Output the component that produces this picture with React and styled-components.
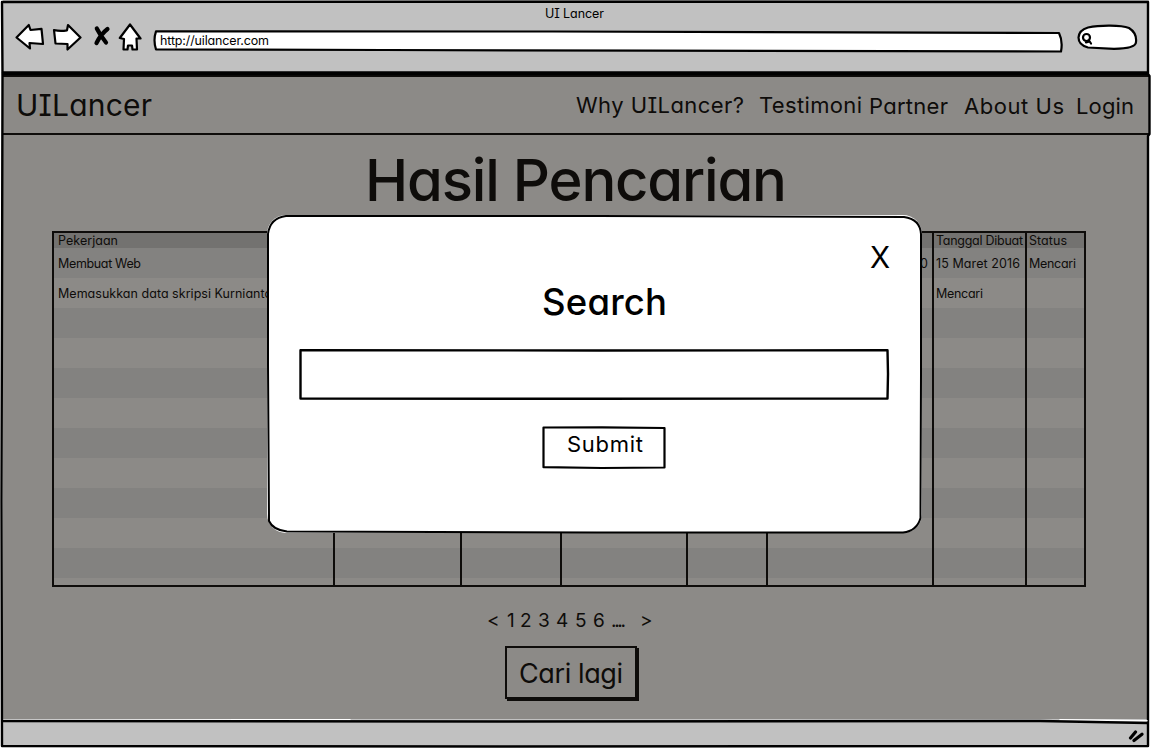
import React, { useLayoutEffect, useRef, useState } from "react";
import styled, { createGlobalStyle } from "styled-components";

const INK = "#0e0c0a";
const SHADE = "#8c8a87";

const Global = createGlobalStyle`
  * { box-sizing: border-box; }
  body {
    margin: 0;
    background: #fff;
    font-family: Inter, "Open Sans", "Liberation Sans", sans-serif;
    font-feature-settings: "cv11", "cv08";
    overflow: hidden;
  }
`;

const Page = styled.div`
  position: relative;
  width: 1151px;
  height: 749px;
  overflow: hidden;
`;

const Window = styled.div`
  display: flex;
  flex-direction: column;
  width: 1149px;
  height: 747px;
  padding-left: 3px;
`;

const Chrome = styled.header`
  display: flex;
  flex-direction: column;
  height: 74px;
  padding-top: 4px;
  background: #c1c1c1;
`;

const TitleBar = styled.div`
  display: flex;
  justify-content: center;
  height: 19px;
  padding-right: 3px;
`;

const Toolbar = styled.div`
  display: flex;
  align-items: flex-start;
  padding-left: 11px;
`;

const Icon = styled.svg`
  display: block;
  flex: none;
  width: ${(p) => p.$w}px;
  height: ${(p) => p.$h}px;
  margin-left: ${(p) => p.$gap || 0}px;
  fill: #fff;
  stroke: #000;
  stroke-width: ${(p) => p.$line || 2.2};
  stroke-linejoin: round;
  stroke-linecap: round;
`;

const AddressBar = styled.div`
  position: relative;
  display: flex;
  align-items: center;
  width: 910px;
  height: 24px;
  margin: 6px 0 0 9px;
  padding-left: 7px;
`;

const Outline = styled.svg`
  position: absolute;
  inset: 0;
  width: 100%;
  height: 100%;
  overflow: visible;
  pointer-events: none;
  fill: ${(p) => p.$fill || "none"};
  stroke: ${(p) => p.$ink || "#000"};
  stroke-width: ${(p) => p.$line || 2.2};
  stroke-linejoin: round;
  stroke-linecap: round;
`;

const Type = styled.span`
  position: relative;
  display: block;
  flex: none;
  width: ${(p) => p.$width}px;
  margin-top: ${(p) => p.$drop || 0}px;
  margin-left: ${(p) => p.$indent || 0}px;
  font-size: ${(p) => p.$size}px;
  font-weight: ${(p) => p.$weight || 400};
  line-height: ${(p) => p.$leading || 20}px;
  color: ${(p) => p.$color || INK};
  white-space: pre;
`;

/* Spreads the letters of a label evenly over the given width. */
function Label({ children, width, ...rest }) {
  const ref = useRef(null);
  const [spacing, setSpacing] = useState(0);
  useLayoutEffect(() => {
    const natural = ref.current.getBoundingClientRect().width;
    const gaps = Math.max(1, String(children).length - 1);
    setSpacing((width - natural) / gaps);
  }, [children, width]);
  return (
    <Type $width={width} {...rest}>
      <span ref={ref} style={{ letterSpacing: spacing }}>
        {children}
      </span>
    </Type>
  );
}

const NavBar = styled.nav`
  display: flex;
  align-items: flex-start;
  justify-content: space-between;
  height: 61px;
  padding: 13px 15px 0 13px;
  background: ${SHADE};
  border-top: 3px solid ${INK};
  border-bottom: 2px solid ${INK};
`;

const NavLinks = styled.div`
  display: flex;
  align-items: flex-start;
`;

const Body = styled.main`
  display: flex;
  flex-direction: column;
  align-items: flex-start;
  height: 584px;
  background: ${SHADE};
`;

const Heading = styled.h1`
  display: flex;
  height: 96px;
  margin: 0;
  padding: 14px 0 0 362px;
`;

const Table = styled.div`
  width: 1034px;
  height: 356px;
  margin-left: 49px;
  border: 2px solid ${INK};
  overflow: hidden;
`;

const Row = styled.div`
  display: grid;
  grid-template-columns: 281px 127px 100px 126px 80px 166px 93px 1fr;
  height: ${(p) => p.$h}px;
  background: ${(p) => p.$bg};
`;

const Cell = styled.div`
  display: flex;
  align-items: center;
  justify-content: ${(p) => (p.$end ? "flex-end" : "flex-start")};
  min-width: 0;
  padding: ${(p) => (p.$low ? 1 : 0)}px ${(p) => (p.$end ? 4 : 0)}px 0 ${(p) => (p.$first ? 4 : 2)}px;
  border-right: 2px solid ${INK};
  &:last-child { border-right: 0; }
`;

const Pager = styled.div`
  display: flex;
  margin: 24px 0 0 484px;
`;

const MoreButton = styled.div`
  position: relative;
  width: 132px;
  height: 53px;
  margin: 15px 0 0 502px;
  padding: 11px 0 0 12px;
  border: 2px solid ${INK};
  background: ${SHADE};
  box-shadow: 2px 2px 0 ${INK};
`;

const StatusBar = styled.footer`
  display: flex;
  justify-content: flex-end;
  height: 28px;
  padding: 10px 5px 0 0;
  background: #c1c1c1;
`;

const Modal = styled.section`
  position: absolute;
  left: 267px;
  top: 215px;
  display: flex;
  flex-direction: column;
  align-items: flex-start;
  width: 655px;
  height: 318px;
  padding: 24px 33px 0 32px;
  border-radius: 19px;
  background: #fff;
`;

const Close = styled.div`
  align-self: flex-end;
  height: 42px;
`;

const Field = styled.div`
  position: relative;
  width: 590px;
  height: 51px;
  margin-top: 26px;
`;

const Submit = styled.div`
  position: relative;
  width: 124px;
  height: 43px;
  margin: 26px 0 0 243px;
  padding: 3px 0 0 25px;
`;

const columns = ["Pekerjaan", "", "", "", "", "", "Tanggal Dibuat", "Status"];
const headWidths = [60, 0, 0, 0, 0, 0, 87, 38];
const rows = [
  [["Membuat Web", 83], 0, 0, 0, 0, ["0", 8], ["15 Maret 2016", 84], ["Mencari", 47]],
  [["Memasukkan data skripsi Kurnianto", 214], 0, 0, 0, 0, 0, ["Mencari", 47], 0],
  [], [], [], [], [], [], [], [], [],
];

const pages = [
  ["<", 12, 0], ["1", 6, 8], ["2", 11, 7], ["3", 11, 7], ["4", 12, 7],
  ["5", 11, 7], ["6", 11, 7], ["....", 15, 7], [">", 13, 14],
];

export default function App() {
  return (
    <Page>
      <Global />
      <Window>
        <Chrome>
          <TitleBar>
            <Label width={59} $size={12.5} $color="#000">UI Lancer</Label>
          </TitleBar>
          <Toolbar>
            <Icon $w={31} $h={29} viewBox="14 23 31 29">
              <path d="M16.5 37.5 28.8 25 30.5 30 41.5 28.8 43 44 29.5 43 30 48.5Z" />
            </Icon>
            <Icon $w={31} $h={29} $gap={6} viewBox="51 23 31 29">
              <path d="M54 30 Q60 31.5 67 30.3L68 25 80.5 37.5 67.5 49.5 67.5 44 55.5 43.5Z" />
            </Icon>
            <Icon $w={20} $h={29} $gap={10} $line={4.2} viewBox="92 23 20 29">
              <path d="M96.800 28.500Q100 35 106 42.500M107.500 29 Q101 34 96.500 43" fill="none" />
            </Icon>
            <Icon $w={26} $h={29} $gap={6} viewBox="118 23 26 29">
              <path d="M130 24.5 140.5 38.5 136.5 38.5 137 49.5 132.5 49.5 132 45.5 128 45.5 127.5 49.5 123.5 49.5 124 39 119.8 38Z" />
            </Icon>
            <AddressBar>
              <Outline $fill="#fff">
                <path d="M3 2.3 400 2.5 906 4Q910 12 908 22.5L500 21.7 230 21 3 20.3Q0 11 3 2.3Z" />
              </Outline>
              <Label width={109} $size={12.5} $color="#000">http://uilancer.com</Label>
            </AddressBar>
            <Icon $w={62} $h={28} $gap={13} viewBox="1076 27 62 28">
              <path d="M1088 31.5C1100 29 1121 29 1129 32Q1137 37 1136 46Q1136 52.500 1114 52.800L1088 51.5Q1078.500 49 1078.500 41.500Q1079 34 1088 31.5Z" />
              <circle cx="1086.500" cy="41.500" r="3.500" />
              <path d="M1089 44.500 1091 47.500M1086 46.500 1089.500 45.500" />
            </Icon>
          </Toolbar>
        </Chrome>
        <NavBar>
          <Label width={136} $size={30} $leading={30}>UILancer</Label>
          <NavLinks>
            <Label width={168} $size={22} $leading={24} $drop={3}>Why UILancer?</Label>
            <Label width={103} $size={22} $leading={24} $drop={3} $indent={15}>Testimoni</Label>
            <Label width={79} $size={22} $leading={24} $drop={4} $indent={7}>Partner</Label>
            <Label width={100} $size={22} $leading={24} $drop={4} $indent={16}>About Us</Label>
            <Label width={58} $size={22} $leading={24} $drop={4} $indent={12}>Login</Label>
          </NavLinks>
        </NavBar>
        <Body>
          <Heading>
            <Label width={422} $size={58} $leading={62} $weight={500}>Hasil Pencarian</Label>
          </Heading>
          <Table>
            <Row $h={15} $bg="#737270">
              {columns.map((c, i) => (
                <Cell key={i} $first={i === 0}>
                  {c && <Label width={headWidths[i]} $size={12.5} $leading={15}>{c}</Label>}
                </Cell>
              ))}
            </Row>
            {rows.map((r, j) => (
              <Row key={j} $h={30} $bg={j % 2 ? SHADE : "#838280"}>
                {columns.map((_, i) => (
                  <Cell key={i} $low $first={i === 0} $end={i === 5}>
                    {r[i] ? <Label width={r[i][1]} $size={12.5} $leading={21}>{r[i][0]}</Label> : null}
                  </Cell>
                ))}
              </Row>
            ))}
            <Row $h={7} $bg={SHADE}>
              {columns.map((_, i) => <Cell key={i} />)}
            </Row>
          </Table>
          <Pager>
            {pages.map(([t, w, g]) => (
              <Label key={t} width={w} $indent={g} $size={19}>{t}</Label>
            ))}
          </Pager>
          <MoreButton>
            <Label width={104} $size={27} $leading={30}>Cari lagi</Label>
          </MoreButton>
        </Body>
        <StatusBar>
          <Icon $w={16} $h={14} $line={3.2} viewBox="1128 729 16 14">
            <path d="M1130.500 738 1135.500 732M1134 740.500 1142 734.300" />
          </Icon>
        </StatusBar>
      </Window>
      <Outline viewBox="0 0 1151 749" $line={2.4}>
        <path d="M2 2 600 1.700 1148 2 1148 74 1149.500 76 1149.500 134 1148 136 1148 746 500 746.500 2 746 1.500 500 2 300 2.500 74Z" />
        <path d="M3 72.500 1147 72.500M3 74 1147 74" />
        <path stroke="#fff" strokeWidth="1.500" d="M4 719.700 350 719.700M1060 719.700 1147 720.700" />
        <path d="M3 721 500 721.500 1040 721 1147 723" />
      </Outline>
      <Modal>
        <Outline $line={2}>
          <path d="M19 1 330 1 637 2Q653 4 654 19L654 160 653.500 303Q650 316 636 317.500L330 317.500 20 316.500Q6 315 2 306L1 150 1 19Q3 3 19 1Z" />
        </Outline>
        <Close>
          <Label width={19} $size={29.5} $leading={37} $color="#000">X</Label>
        </Close>
        <Label width={125} $size={36.5} $leading={42} $indent={243} $weight={500} $color="#000">Search</Label>
        <Field>
          <Outline $line={2.4}>
            <path d="M1.500 1.200 300 1.500 588.500 1.200 589 25 588.500 49.500 300 49.800 1.500 49.500 1.500 25Z" />
          </Outline>
        </Field>
        <Submit>
          <Outline>
            <path d="M1.500 1.500 60 1.300 122.500 2 122.500 41.500 60 42 1.500 41.200Z" />
          </Outline>
          <Label width={76} $size={22} $leading={30} $color="#000">Submit</Label>
        </Submit>
      </Modal>
    </Page>
  );
}
